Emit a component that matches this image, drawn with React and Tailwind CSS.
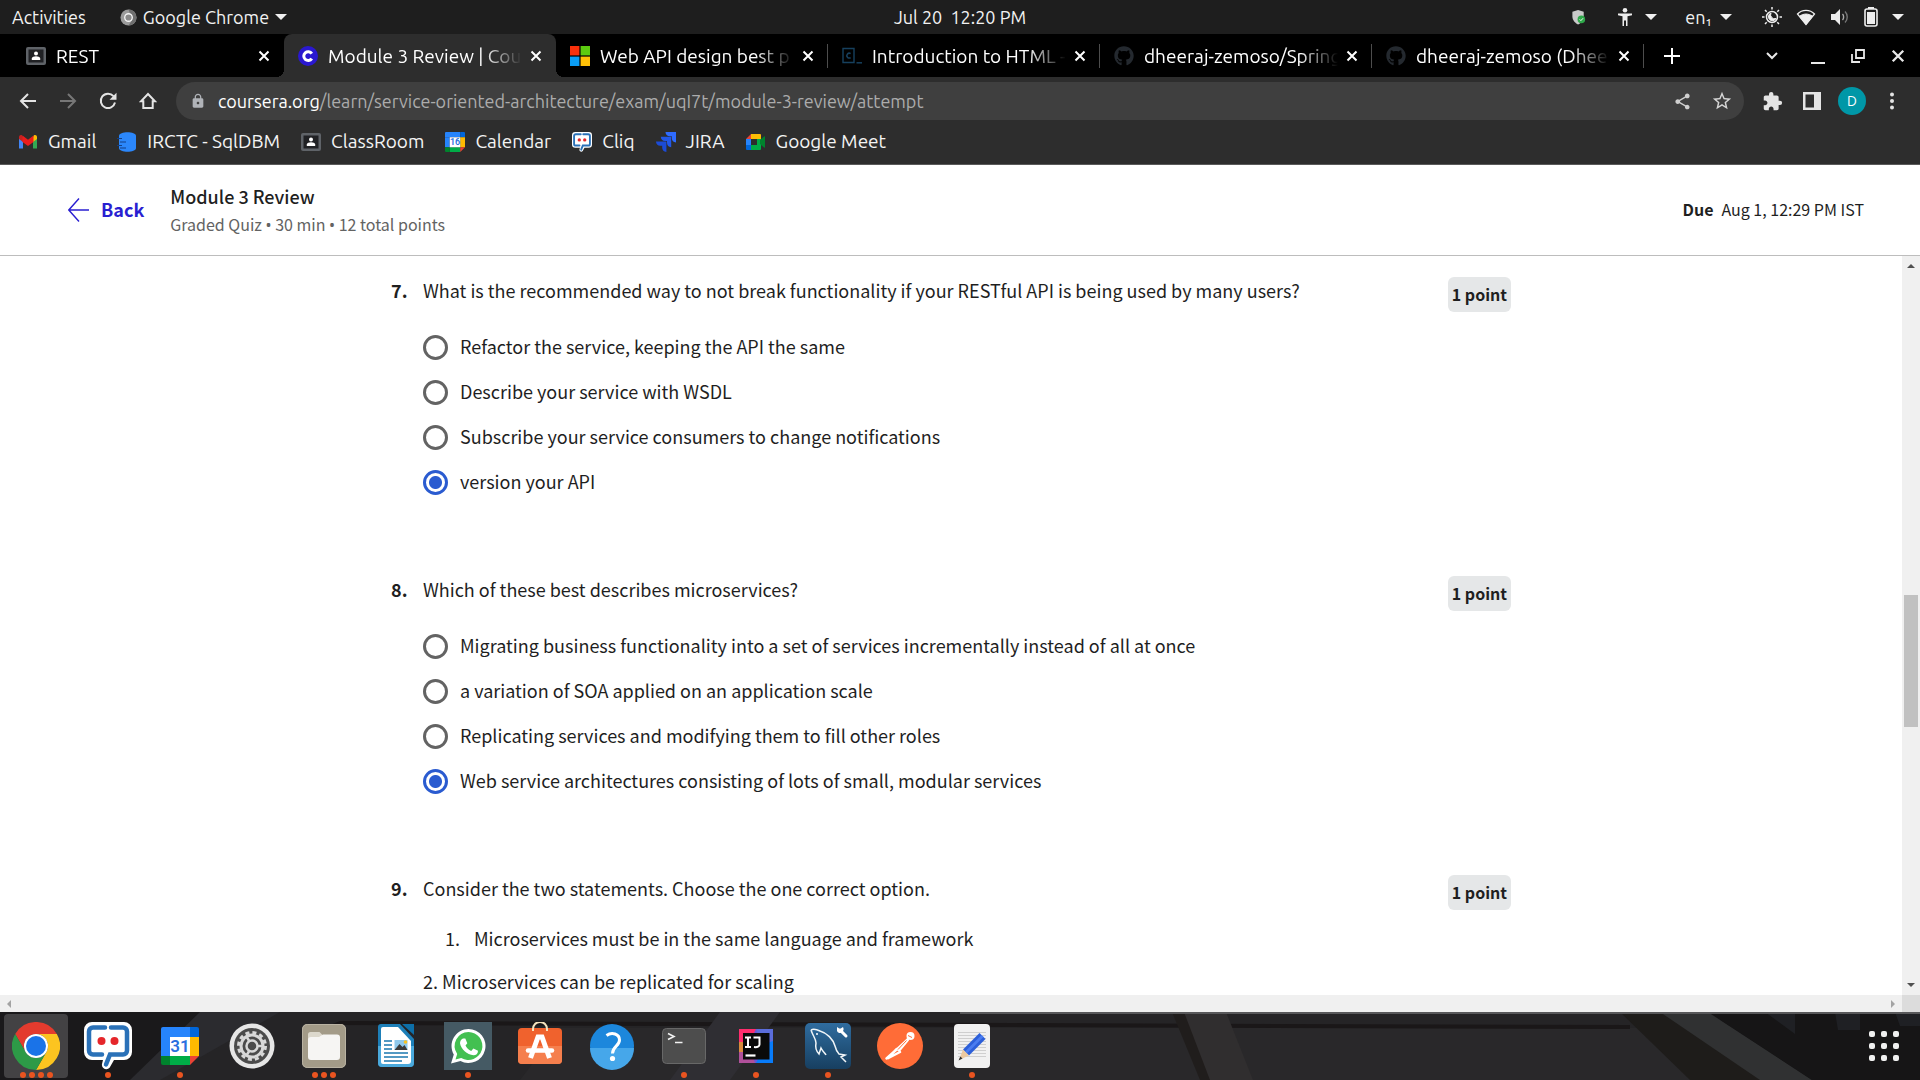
import React from "react";
import { FaGithub } from "react-icons/fa";
import { MdExtension, MdOutlineStarBorder, MdShare, MdLock } from "react-icons/md";

const uiFont = "font-['Ubuntu','Noto_Sans',sans-serif]";
const pageFont = "font-['Source_Sans_Pro','Noto_Sans_CJK_SC',sans-serif]";

function Icon({ size = "size-5", box = "0 0 20 20", children }) {
  return (
    <svg viewBox={box} className={`${size} shrink-0`} fill="none" aria-hidden="true">
      {children}
    </svg>
  );
}

/* ---------- small favicons ---------- */

const ClassroomIcon = () => (
  <Icon>
    <rect x="0" y="1" width="20" height="18" rx="2" fill="#5f6368" />
    <rect x="2.5" y="3.5" width="15" height="13" fill="#202124" />
    <circle cx="10" cy="7.6" r="2" fill="#fff" />
    <path d="M5.8 14v-1.4c0-1.6 2.4-2.3 4.2-2.3s4.2.7 4.2 2.3V14z" fill="#fff" />
  </Icon>
);

const CourseraIcon = () => (
  <Icon>
    <circle cx="10" cy="10" r="10" fill="#2a18d0" />
    <path d="M13.8 7.6A4.4 4.4 0 1 0 13.8 12.6" stroke="#fff" strokeWidth="3" />
  </Icon>
);

const MicrosoftIcon = () => (
  <Icon>
    <path fill="#f9300b" d="M0 0h9.4v9.4H0z" />
    <path fill="#5ccb10" d="M10.6 0H20v9.4h-9.4z" />
    <path fill="#0a9df5" d="M0 10.6h9.4V20H0z" />
    <path fill="#ffc107" d="M10.6 10.6H20V20h-9.4z" />
  </Icon>
);

const CodecademyIcon = () => (
  <Icon>
    <path d="M1 2.5h11v14H1z" stroke="#16405e" strokeWidth="1.4" />
    <path d="M8.6 7.6a2.4 2.4 0 1 0 0 4" stroke="#16405e" strokeWidth="1.5" />
    <path d="M14.5 16.8H20" stroke="#16405e" strokeWidth="1.5" />
  </Icon>
);

const GithubTabIcon = () => <FaGithub className="size-5 shrink-0 text-[#24292f]" aria-hidden="true" />;

const GmailIcon = () => (
  <Icon>
    <path d="M1 5v11.5h4V9z" fill="#4285f4" />
    <path d="M15 9v7.500h4V5z" fill="#34a853" />
    <path d="M15 5v5l4-3V5c0-2-2-2.500-3.200-1.600z" fill="#fbbc04" />
    <path d="M1 5v2l4 3V5l-.8-1.600C3 2.500 1 3 1 5z" fill="#c5221f" />
    <path d="M4.500 3.600L10 7.800l5.500-4.200V10L10 14 4.500 10z" fill="#ea1c1c" />
  </Icon>
);

const SqlDbmIcon = () => (
  <Icon>
    <path d="M2 4c0-5 17-5 17 0v12c0 5-17 5-17 0z" fill="#2b87fb" />
    <path d="M0 6.500h5M3 10h6M0 13.500h5M3 16h6" stroke="#123f86" strokeWidth="1.200" />
  </Icon>
);

function CalendarIcon({ day, size = "size-5" }) {
  return (
    <Icon size={size} box="0 0 38 38">
      <path d="M2 0h27v10H0V2a2 2 0 0 1 2-2z" fill="#2684fc" />
      <path d="M29 0h7a2 2 0 0 1 2 2v8h-9z" fill="#0066da" />
      <path d="M0 10h9v19H0z" fill="#2684fc" />
      <path d="M29 10h9v19h-9z" fill="#ffba00" />
      <path d="M9 29h20v9H9z" fill="#00ac47" />
      <path d="M0 29h9v9H2a2 2 0 0 1-2-2z" fill="#00832d" />
      <path d="M29 29h9l-9 9z" fill="#ea4335" />
      <path d="M9 10h20v19H9z" fill="#fff" />
      <text x="19" y="25" textAnchor="middle" fontSize="17" fontWeight="600" fontFamily="Roboto, sans-serif" fill="#2a6fe0">
        {day}
      </text>
    </Icon>
  );
}

function CliqIcon({ size = "size-5" }) {
  return (
    <Icon size={size} box="0 0 48 48">
      <path d="M8 0h32a8 8 0 0 1 8 8v22a8 8 0 0 1-8 8H30l-4 7c-2 4-9 2-8-3l1-4H8a8 8 0 0 1-8-8V8a8 8 0 0 1 8-8z" fill="#fff" />
      <path
        d="M21 5.500H9A4 4 0 0 0 5 9.500v19a4 4 0 0 0 4 4h9M27 5.500h12a4 4 0 0 1 4 4v19a4 4 0 0 1-4 4H26l-4 10"
        stroke="#2a71b8"
        strokeWidth="4.500"
        strokeLinecap="round"
      />
      <circle cx="17.500" cy="19" r="4" fill="#e5262b" />
      <circle cx="30.500" cy="19" r="4" fill="#e5262b" />
    </Icon>
  );
}

const JiraIcon = () => (
  <Icon>
    <path d="M9.500 0H20v10.500c-2.600 0-4.200-2-4.200-4.200V4.300h-2.100C11.300 4.300 9.500 2.600 9.500 0z" fill="#2e6bff" />
    <path d="M4.800 4.800h10.400v10.400c-2.600 0-4.200-2-4.200-4.200V9H9c-2.500 0-4.200-1.700-4.200-4.200z" fill="#2257e8" />
    <path d="M0 9.500h10.400V20c-2.600 0-4.200-2-4.200-4.200v-2H4.200C1.700 13.800 0 12 0 9.500z" fill="#1b4bd6" />
  </Icon>
);

const MeetIcon = () => (
  <Icon>
    <path d="M0 7l5-5v5z" fill="#ea4335" />
    <path d="M5 2h9a1 1 0 0 1 1 1v4H5z" fill="#fbbc04" />
    <path d="M0 7h5v6H0z" fill="#2684fc" />
    <path d="M0 13h5v5H1a1 1 0 0 1-1-1z" fill="#0066da" />
    <path d="M5 13h6V7h4v10a1 1 0 0 1-1 1H5z" fill="#00ac47" />
    <path d="M14 8l4-3.500c.6-.5 1-.2 1 .5v10c0 .7-.4 1-1 .5L14 12z" fill="#00832d" />
  </Icon>
);

/* ---------- desktop top bar ---------- */

const Caret = () => <span className="size-0 border-x-6 border-t-6 border-x-transparent border-t-[#f0f0f0]" />;

function TopBar() {
  return (
    <header className="grid h-[34px] shrink-0 grid-cols-[1fr_auto_1fr] items-center bg-[#1e1e1e] text-[18px] leading-6 text-[#f2f2f2]">
      <div className="flex items-center gap-[34px] pl-3">
        <button>Activities</button>
        <button className="flex items-center">
          <svg viewBox="0 0 18 18" className="mr-1.5 size-[17px]" fill="none" aria-hidden="true">
            <circle cx="9" cy="9" r="8.500" fill="#9b9b9b" />
            <path d="M9 .5a8.500 8.500 0 0 1 0 17l4-6z" fill="#6f6f6f" />
            <circle cx="9" cy="9" r="4" fill="#8a8a8a" stroke="#f5f5f5" strokeWidth="1.400" />
          </svg>
          <span className="mr-1.5">Google Chrome</span>
          <Caret />
        </button>
      </div>
      <time className="whitespace-pre">Jul 20  12:20 PM</time>
      <div className="flex items-center justify-end pr-4">
        <svg viewBox="0 0 16 18" className="mr-[30px] h-[17px] w-4" fill="none" aria-label="Shield">
          <path d="M7 1l6 2v5c0 4-3 7-6 8.500C4 15 1 12 1 8V3z" fill="#c9c9c9" />
          <circle cx="10.500" cy="11" r="4" fill="#2fa84a" />
          <path d="M8.700 11l1.300 1.300 2.300-2.500" stroke="#fff" />
        </svg>
        <button className="mr-7 flex items-center gap-3" aria-label="Accessibility">
          <svg viewBox="0 0 16 18" className="h-[18px] w-4 text-[#eee]" fill="currentColor" aria-hidden="true">
            <circle cx="8" cy="2.300" r="2.300" />
            <path d="M1 5.500h14v1.800l-4.500 1V18H9v-5.500H7V18H5.500V8.300L1 7.300z" />
          </svg>
          <Caret />
        </button>
        <button className="mr-[30px] flex items-center gap-2">
          <span>en₁</span>
          <Caret />
        </button>
        <button className="flex items-center gap-3.5 text-[#eee]" aria-label="System">
          <svg viewBox="0 0 20 20" className="size-5" fill="none" stroke="currentColor" aria-hidden="true">
            <circle cx="10" cy="10" r="5.500" strokeWidth="1.500" />
            <path d="M9 6a4 4 0 1 0 5 5.500 4 4 0 0 1-5-5.500z" fill="currentColor" />
            <path d="M10 0v2.500M10 17.500V20M0 10h2.500M17.500 10H20M3 3l1.700 1.700M15.300 15.300L17 17M3 17l1.700-1.700M15.300 4.700L17 3" strokeWidth="1.500" />
          </svg>
          <svg viewBox="0 0 20 18" className="h-[18px] w-5" fill="none" stroke="currentColor" aria-hidden="true">
            <path d="M1.500 6C6 1.200 14 1.200 18.500 6L10 16.500z" strokeWidth="1.300" />
            <path d="M3.500 8.300c4-3 9-3 13 0L10 16.500z" fill="currentColor" />
          </svg>
          <svg viewBox="0 0 20 18" className="h-[18px] w-5" fill="none" aria-hidden="true">
            <path d="M1 6h4l5-5v16l-5-5H1z" fill="currentColor" />
            <path d="M12.500 6c1.500 1.500 1.500 4.500 0 6" stroke="#aaa" strokeWidth="1.400" />
            <path d="M15 3.500c3 3 3 8 0 11" stroke="#777" strokeWidth="1.400" />
          </svg>
          <svg viewBox="0 0 14 20" className="h-5 w-3.5" fill="none" aria-hidden="true">
            <path d="M4 0h6v2H4z" fill="currentColor" />
            <rect x="1" y="2" width="12" height="17" rx="2" stroke="currentColor" strokeWidth="1.600" />
            <rect x="3" y="5" width="8" height="12" fill="currentColor" />
          </svg>
          <Caret />
        </button>
      </div>
    </header>
  );
}

/* ---------- browser chrome ---------- */

const Cross = ({ size = "size-3" }) => (
  <svg viewBox="0 0 12 12" className={size} stroke="currentColor" strokeWidth="2" aria-hidden="true">
    <path d="M1.500 1.500l9 9M10.500 1.500l-9 9" />
  </svg>
);

const tabs = [
  { title: "REST", icon: <ClassroomIcon /> },
  { title: "Module 3 Review | Cou", icon: <CourseraIcon />, active: true },
  { title: "Web API design best p", icon: <MicrosoftIcon />, divider: true },
  { title: "Introduction to HTML -", icon: <CodecademyIcon />, divider: true },
  { title: "dheeraj-zemoso/Spring", icon: <GithubTabIcon />, divider: true },
  { title: "dheeraj-zemoso (Dhee", icon: <GithubTabIcon />, divider: true },
];

function Tab({ title, icon, active, divider }) {
  return (
    <div
      role="tab"
      aria-selected={!!active}
      className={`relative flex h-full w-[272px] min-w-0 items-center pr-2.5 pl-3.5 ${active ? "rounded-t-lg bg-[#2d2d2d]" : ""}`}
    >
      {active && (
        <>
          <span className="absolute bottom-0 -left-2 size-2 bg-[radial-gradient(circle_at_0_0,transparent_8px,#2d2d2d_8px)]" />
          <span className="absolute -right-2 bottom-0 size-2 bg-[radial-gradient(circle_at_100%_0,transparent_8px,#2d2d2d_8px)]" />
        </>
      )}
      {icon}
      <span className="mr-1 ml-2.5 min-w-0 flex-1 overflow-hidden whitespace-nowrap [mask-image:linear-gradient(to_right,black_80%,transparent)]">
        {title}
      </span>
      <button className="grid size-5 shrink-0 place-items-center" aria-label={`Close ${title}`}>
        <Cross />
      </button>
      {divider && <span className="absolute top-2.5 right-0 h-6 w-px bg-[#4d4d4d]" />}
    </div>
  );
}

function TabStrip() {
  return (
    <div className="flex h-[43px] shrink-0 items-center bg-black pr-3 pl-3 text-[19px] leading-6 text-white">
      <div role="tablist" className="flex h-full min-w-0">
        {tabs.map((t) => (
          <Tab key={t.title} {...t} />
        ))}
      </div>
      <button className="ml-4 grid size-6 shrink-0 place-items-center" aria-label="New tab">
        <svg viewBox="0 0 16 16" className="size-4" stroke="currentColor" strokeWidth="2" aria-hidden="true">
          <path d="M8 0v16M0 8h16" />
        </svg>
      </button>
      <div className="ml-auto flex shrink-0 items-center gap-5 text-[#e8e8e8]">
        <button className="grid size-6 place-items-center" aria-label="Search tabs">
          <svg viewBox="0 0 12 8" className="w-3" fill="none" stroke="currentColor" strokeWidth="2" aria-hidden="true">
            <path d="M1 1l5 5 5-5" />
          </svg>
        </button>
        <button className="ml-1 flex h-6 w-5 items-end justify-center pb-1" aria-label="Minimize">
          <span className="h-0.5 w-3.5 bg-current" />
        </button>
        <button className="grid h-6 w-5 place-items-center" aria-label="Restore">
          <svg viewBox="0 0 14 14" className="size-3.5" fill="none" stroke="currentColor" strokeWidth="1.800" aria-hidden="true">
            <path d="M5 1h8v8H5zM1 5v8h8" />
          </svg>
        </button>
        <button className="grid h-6 w-5 place-items-center" aria-label="Close window">
          <Cross size="size-3.5" />
        </button>
      </div>
    </div>
  );
}

function Toolbar() {
  return (
    <div className="flex h-12 shrink-0 items-center bg-[#2d2d2d] pr-4 pl-4 text-[#e4e4e4]">
      <div className="mr-4 flex items-center gap-4">
        <button className="grid size-6 place-items-center" aria-label="Back">
          <svg viewBox="0 0 18 18" className="size-[18px]" fill="none" stroke="currentColor" strokeWidth="2" aria-hidden="true">
            <path d="M17 9H2M9 2L2 9l7 7" />
          </svg>
        </button>
        <button className="grid size-6 place-items-center text-[#777]" aria-label="Forward">
          <svg viewBox="0 0 18 18" className="size-[18px]" fill="none" stroke="currentColor" strokeWidth="2" aria-hidden="true">
            <path d="M1 9h15M9 2l7 7-7 7" />
          </svg>
        </button>
        <button className="grid size-6 place-items-center" aria-label="Reload">
          <svg viewBox="0 0 18 18" className="size-[18px]" fill="none" aria-hidden="true">
            <path d="M14.500 4.200A7.200 7.200 0 1 0 16 10.500" stroke="currentColor" strokeWidth="2" />
            <path d="M17.500 .8v7h-7z" fill="currentColor" />
          </svg>
        </button>
        <button className="grid size-6 place-items-center" aria-label="Home">
          <svg viewBox="0 0 18 18" className="size-[18px]" fill="none" stroke="currentColor" strokeWidth="2" aria-hidden="true">
            <path d="M9 2L2 9.300h2.300V16h9.400V9.300H16z" />
          </svg>
        </button>
      </div>
      <div className="flex h-[38px] min-w-0 flex-1 items-center rounded-full bg-[#3f3f3f] pr-2.5 pl-3.5">
        <MdLock className="size-4 text-[#b0b3b8]" aria-hidden="true" />
        <p className="ml-3 min-w-0 flex-1 truncate text-[18px] leading-6 text-[#acacac]">
          <span className="text-white">coursera.org</span>/learn/service-oriented-architecture/exam/uqI7t/module-3-review/attempt
        </p>
        <button className="mr-4 grid size-6 place-items-center text-[#cfcfcf]" aria-label="Share">
          <MdShare className="size-[19px]" />
        </button>
        <button className="grid size-6 place-items-center text-[#d6d6d6]" aria-label="Bookmark">
          <MdOutlineStarBorder className="size-[22px]" />
        </button>
      </div>
      <button className="ml-4 grid size-6 place-items-center" aria-label="Extensions">
        <MdExtension className="size-[21px]" />
      </button>
      <button className="ml-4 grid size-6 place-items-center" aria-label="Side panel">
        <svg viewBox="0 0 18 18" className="size-[18px]" aria-hidden="true">
          <path d="M0 0h18v18H0zM2.500 2.500v13H11v-13z" fill="currentColor" fillRule="evenodd" />
        </svg>
      </button>
      <button className="ml-3.5 grid size-7 place-items-center rounded-full bg-[#0097a7] text-sm text-white" aria-label="Profile D">
        D
      </button>
      <button className="ml-3.5 grid size-6 place-items-center" aria-label="Menu">
        <svg viewBox="0 0 4 18" className="h-[18px] w-1" fill="currentColor" aria-hidden="true">
          <circle cx="2" cy="2.500" r="2" />
          <circle cx="2" cy="9" r="2" />
          <circle cx="2" cy="15.500" r="2" />
        </svg>
      </button>
    </div>
  );
}

const bookmarks = [
  ["Gmail", <GmailIcon />],
  ["IRCTC - SqlDBM", <SqlDbmIcon />],
  ["ClassRoom", <ClassroomIcon />],
  ["Calendar", <CalendarIcon day="16" />],
  ["Cliq", <CliqIcon />],
  ["JIRA", <JiraIcon />],
  ["Google Meet", <MeetIcon />],
];

function Bookmarks() {
  return (
    <nav className="flex shrink-0 gap-[21px] border-b border-[#5a5a5a] bg-[#2d2d2d] pt-1 pb-2.5 pl-[18px] text-[19px] leading-[25px] text-[#f4f4f4]">
      {bookmarks.map(([label, icon]) => (
        <a key={label} href="#" className="flex items-center gap-2.5 whitespace-nowrap">
          {icon}
          {label}
        </a>
      ))}
    </nav>
  );
}

/* ---------- quiz page ---------- */

const questions = [
  {
    n: 7,
    text: "What is the recommended way to not break functionality if your RESTful API is being used by many users?",
    options: [
      "Refactor the service, keeping the API the same",
      "Describe your service with WSDL",
      "Subscribe your service consumers to change notifications",
      "version your API",
    ],
    checked: 3,
  },
  {
    n: 8,
    text: "Which of these best describes microservices?",
    options: [
      "Migrating business functionality into a set of services incrementally instead of all at once",
      "a variation of SOA applied on an application scale",
      "Replicating services and modifying them to fill other roles",
      "Web service architectures consisting of lots of small, modular services",
    ],
    checked: 3,
  },
  { n: 9, text: "Consider the two statements. Choose the one correct option." },
];

const Dot = () => <span className="font-['Noto_Sans',sans-serif]">•</span>;

function QuizHeader() {
  return (
    <div className="flex h-[91px] shrink-0 items-center border-b border-[#bdbdbd] bg-white pr-14 pl-[68px] text-[#1f1f1f]">
      <a href="#" className="flex items-center gap-3 text-[18px] leading-7 font-bold text-[#2a1fd1]">
        <svg viewBox="0 0 21 24" className="h-6 w-[21px]" fill="none" stroke="currentColor" strokeWidth="1.400" aria-hidden="true">
          <path d="M21 12H1M11 .5L.8 12 11 23.500" />
        </svg>
        <span className="pb-0.5">Back</span>
      </a>
      <div className="ml-[26px]">
        <h1 className="text-[18px] leading-7 font-medium">Module 3 Review</h1>
        <p className="text-base leading-7 text-[#636363]">
          Graded Quiz <Dot /> 30 min <Dot /> 12 total points
        </p>
      </div>
      <p className="ml-auto flex gap-2 pb-0.5 text-base leading-6">
        <b>Due</b>
        <span>Aug 1, 12:29 PM IST</span>
      </p>
    </div>
  );
}

function Question({ n, text, options, checked }) {
  return (
    <section className="flex items-start pb-[70px]">
      <b className="w-8 shrink-0 leading-7">{n}.</b>
      <div className="min-w-0 flex-1">
        <p id={`q${n}`} className="pb-0.5 leading-7">
          {text}
        </p>
        {options ? (
          <div role="radiogroup" aria-labelledby={`q${n}`} className="mt-[19px]">
            {options.map((o, i) => (
              <label key={o} className="flex h-[45px] items-center gap-3">
                <input
                  type="radio"
                  name={`q${n}`}
                  defaultChecked={i === checked}
                  className="size-[25px] shrink-0 appearance-none rounded-full border-3 border-[#636363] bg-white checked:border-[#2a5bd0] checked:bg-[radial-gradient(circle,#2a5bd0_6px,transparent_7px)]"
                />
                <span className="pb-1">{o}</span>
              </label>
            ))}
          </div>
        ) : (
          <div>
            <ol className="mt-[19px] pl-[22px]">
              <li className="flex">
                <span className="w-[29px]">1.</span>
                Microservices must be in the same language and framework
              </li>
            </ol>
            <p className="mt-[13px]">2. Microservices can be replicated for scaling</p>
          </div>
        )}
      </div>
      <b className="mt-px rounded-md bg-[#e5e7e8] px-1 py-[5px] text-base leading-[25px]">1 point</b>
    </section>
  );
}

function Quiz() {
  return (
    <div className="flex min-h-0 flex-1 flex-col bg-white">
      <div className="flex min-h-0 flex-1">
        <main className="min-w-0 flex-1 overflow-hidden px-6 pt-5 text-[18px] leading-[30px] text-[#1f1f1f]">
          <div className="mx-auto max-w-[1120px]">
            {questions.map((q) => (
              <Question key={q.n} {...q} />
            ))}
          </div>
        </main>
        <div className="flex w-[18px] shrink-0 flex-col items-center bg-[#f0f0f0] pt-2 pb-2">
          <span className="size-0 border-x-4 border-b-4 border-x-transparent border-b-[#505050]" />
          <span className="flex-[327]" />
          <span className="w-3.5 flex-[132] bg-[#c1c1c1]" />
          <span className="flex-[256]" />
          <span className="size-0 border-x-4 border-t-4 border-x-transparent border-t-[#505050]" />
        </div>
      </div>
      <div className="flex h-[17px] shrink-0 items-center bg-[#f0f0f0]">
        <span className="ml-[7px] size-0 border-y-4 border-r-4 border-y-transparent border-r-[#a3a3a3]" />
        <span className="mr-[7px] ml-auto size-0 border-y-4 border-l-4 border-y-transparent border-l-[#a3a3a3]" />
        <span className="h-full w-[18px] bg-[#dcdcdc]" />
      </div>
    </div>
  );
}

/* ---------- dock ---------- */

const ChromeDock = () => (
  <Icon size="size-12" box="0 0 48 48">
    <path d="M24 12H44.800A24 24 0 0 0 3.200 12L13.600 30A12 12 0 0 1 24 12z" fill="#e33b2e" />
    <path d="M34.400 30L24 48A24 24 0 0 0 44.800 12H24A12 12 0 0 1 34.400 30z" fill="#fcc420" />
    <path d="M13.600 30L3.200 12A24 24 0 0 0 24 48L34.400 30A12 12 0 0 1 13.600 30z" fill="#2d9a47" />
    <circle cx="24" cy="24" r="12" fill="#fff" />
    <circle cx="24" cy="24" r="10" fill="#1a73e8" />
  </Icon>
);

const SettingsDock = () => (
  <Icon size="size-12" box="0 0 48 48">
    <circle cx="24" cy="24" r="22.500" fill="#e6e6e6" />
    <circle cx="24" cy="24" r="18" fill="#4b4b4b" />
    <circle cx="24" cy="24" r="13.500" stroke="#d8d8d8" strokeWidth="3" strokeDasharray="4 3.070" />
    <circle cx="24" cy="24" r="11" stroke="#d8d8d8" strokeWidth="3" />
    <circle cx="24" cy="24" r="5.500" stroke="#d8d8d8" strokeWidth="2.500" />
    <path d="M29 24h6M21.500 19.500l-3-5M21.500 28.500l-3 5" stroke="#d8d8d8" strokeWidth="2.500" />
  </Icon>
);

const FilesDock = () => (
  <Icon size="size-12" box="0 0 48 48">
    <rect x="2" y="2" width="44" height="44" rx="5" fill="#a39b88" />
    <rect x="2.500" y="2.500" width="43" height="43" rx="5" stroke="#b9b2a2" />
    <path d="M8 15v-2.500a2.500 2.500 0 0 1 2.500-2.500h9l4 4H37a3 3 0 0 1 3 3v4H8z" fill="#dcd8cc" />
    <path d="M8 18a3 3 0 0 1 3-3h8l4-2.500h14a3 3 0 0 1 3 3V35a3 3 0 0 1-3 3H11a3 3 0 0 1-3-3z" fill="#f6f5f3" />
  </Icon>
);

const WriterDock = () => (
  <Icon size="size-12" box="0 0 48 48">
    <path d="M9 2h19l14 15v24a4 4 0 0 1-4 4H10a4 4 0 0 1-4-4V5a3 3 0 0 1 3-3z" fill="#1d7fb8" />
    <path d="M30 2h12v11z" fill="#0d6fa8" />
    <path d="M9 24h33v17a4 4 0 0 1-4 4H10a4 4 0 0 1-4-4V24z" fill="#4aa9dc" />
    <path d="M11 5h15l13 14v20a3 3 0 0 1-3 3H11a2 2 0 0 1-2-2V7a2 2 0 0 1 2-2z" fill="#fff" />
    <path d="M12 19h8M12 23h8M12 27h8M12 31h24M12 35h24M12 39h18" stroke="#1b78b0" strokeWidth="1.700" />
    <path d="M22.500 18h13v10h-13z" fill="#8fc9ec" />
    <path d="M22.500 28l5-6 3 3 2-2 3 5z" fill="#3a3a3a" />
    <circle cx="33.500" cy="20" r="1.800" fill="#f8c322" />
  </Icon>
);

const WhatsappDock = () => (
  <Icon size="size-12" box="0 0 48 48">
    <path d="M0 0h48v48H0z" fill="#455a64" />
    <path d="M24.500 7a17 17 0 1 1-8 32L7 41.500 9.800 32.500A17 17 0 0 1 24.500 7z" fill="#fff" />
    <path d="M24.500 10a14 14 0 1 1-7.300 26L11.500 37.500 13.200 32A14 14 0 0 1 24.500 10z" fill="#43c051" />
    <path d="M19 16.500l2.300.1 2 4.600-1.800 2.300c1.300 2.500 3 4.200 5.700 5.400l2.200-2.400 4.600 2.200c0 3-2 4.500-4.500 4.500-6.500-.5-12.500-6-13.500-12 0-2.200 1.200-4 3-4.700z" fill="#fff" />
  </Icon>
);

const SoftwareDock = () => (
  <Icon size="size-12" box="0 0 48 48">
    <rect x="2" y="6" width="44" height="36" rx="4" fill="#f0622d" />
    <path d="M2 24h44v14a4 4 0 0 1-4 4H6a4 4 0 0 1-4-4z" fill="#f57f4d" />
    <path d="M17 9V7a7 7 0 0 1 14 0v2" stroke="#f5e2bd" strokeWidth="2" />
    <path d="M14.500 36L22 15h4l7.500 21" stroke="#fff" strokeWidth="5" />
    <path d="M12 28.500h24" stroke="#fff" strokeWidth="4.500" strokeLinecap="round" />
  </Icon>
);

const HelpDock = () => (
  <Icon size="size-12" box="0 0 48 48">
    <circle cx="24" cy="24" r="22" fill="#1c87dc" />
    <path d="M2 26a22 22 0 0 0 44 0z" fill="#46a7ea" />
    <path d="M18.500 13.500C24 9.500 31.500 12 31.500 18c0 6-7 6.500-7 13.500" stroke="#fff" strokeWidth="3" />
    <circle cx="24.500" cy="36.500" r="2.600" fill="#fff" />
  </Icon>
);

const TerminalDock = () => (
  <Icon size="size-12" box="0 0 48 48">
    <rect x="2.500" y="6.500" width="43" height="35" rx="4" fill="#4d4d4d" stroke="#686868" />
    <path d="M8 11.500l6 3-6 3M15 20.500h7.500" stroke="#f2f2f2" strokeWidth="1.600" />
  </Icon>
);

const IntellijDock = () => (
  <Icon size="size-12" box="0 0 48 48">
    <path d="M7 7h34v34H7z" fill="#6b57d2" />
    <path d="M7 7h17l-8 16H7z" fill="#fe2d6d" />
    <path d="M7 20h10v12H7z" fill="#d98b3c" />
    <path d="M7 30h12l4 11H7z" fill="#b0509a" />
    <path d="M41 16v25H24l6-12z" fill="#087cfa" />
    <path d="M24 7h17v12l-12 4z" fill="#5b6ddb" />
    <path d="M11 11h26.500v26.500H11z" fill="#0a0a0a" />
    <path d="M13 15.500h6M16 15.500v9.500M13 25h6M21.500 15.500h6v7c0 2-2 3-5.500 2.500" stroke="#fff" strokeWidth="2" />
    <path d="M13.500 33.500h10" stroke="#fff" strokeWidth="2.200" />
  </Icon>
);

const WorkbenchDock = () => (
  <Icon size="size-12" box="0 0 48 48">
    <defs>
      <linearGradient id="workbench" x1="0" y1="0" x2="0" y2="1">
        <stop stopColor="#2f6c9f" />
        <stop offset="1" stopColor="#173f60" />
      </linearGradient>
    </defs>
    <rect x="1" y="1" width="46" height="46" rx="5" fill="url(#workbench)" />
    <path
      d="M7 8c3-2 7 0 9 1 7 2 13 8 15 15 1 4 2 6 4 8l6 1-4 2 5 5M7 8c2 6 5 9 5 13-1 5 1 9 3 11l2-6c2 4 4 5 5 7"
      stroke="#f0f5f8"
      strokeWidth="1.500"
    />
    <circle cx="13" cy="12" r="1" fill="#fff" />
    <path d="M36 8l6 6" stroke="#fff" strokeWidth="3" strokeLinecap="round" />
    <path d="M33 5v4a3 3 0 0 0 5 1 4 4 0 0 0 1-5l-3 2z" fill="#fff" />
  </Icon>
);

const PostmanDock = () => (
  <Icon size="size-12" box="0 0 48 48">
    <circle cx="24" cy="24" r="23" fill="#ff6c37" />
    <circle cx="34.500" cy="14" r="4" fill="#fff" />
    <path d="M31.500 16L20 26.500l3.500 3.500L33 18.500z" fill="#fff" />
    <path d="M20.500 27l-9 9.500L24 30M20 28l-9.500 8.500M32 17L22.500 28" stroke="#fff" strokeWidth="2.500" strokeLinecap="round" />
    <path d="M30.500 18.500l-8.500 9M32 13.500l4 2" stroke="#ff6c37" strokeWidth="1" />
  </Icon>
);

const EditorDock = () => (
  <Icon size="size-12" box="0 0 48 48">
    <rect x="6" y="2" width="36" height="44" rx="4" fill="#f1f1f1" />
    <path d="M10 10.500h28M10 13.500h28M10 16.500h28M10 19.500h28M10 22.500h28M10 25.500h28M10 28.500h28M10 31.500h28M10 34.500h28" stroke="#cfcfcf" />
    <path d="M31.500 11l6 6L21 33.500l-6-6z" fill="#2c5fd9" />
    <path d="M33.500 13l2 2L19 31.500l-2-2z" fill="#4a7cf0" />
    <path d="M15 27.500l6 6L11 38z" fill="#ecc9a0" />
    <path d="M12.300 34.500l2.200 2L10.500 38.500z" fill="#333" />
  </Icon>
);

const dockItems = [
  { label: "Google Chrome", icon: <ChromeDock />, dots: 4, active: true },
  { label: "Cliq", icon: <CliqIcon size="size-12" />, dots: 1 },
  { label: "Calendar", icon: <CalendarIcon day="31" size="size-[38px]" />, dots: 1 },
  { label: "Settings", icon: <SettingsDock />, dots: 0 },
  { label: "Files", icon: <FilesDock />, dots: 3 },
  { label: "Writer", icon: <WriterDock />, dots: 0 },
  { label: "WhatsApp", icon: <WhatsappDock />, dots: 1 },
  { label: "Software", icon: <SoftwareDock />, dots: 0 },
  { label: "Help", icon: <HelpDock />, dots: 0 },
  { label: "Terminal", icon: <TerminalDock />, dots: 1 },
  { label: "IntelliJ IDEA", icon: <IntellijDock />, dots: 1 },
  { label: "MySQL Workbench", icon: <WorkbenchDock />, dots: 1 },
  { label: "Postman", icon: <PostmanDock />, dots: 0 },
  { label: "Text Editor", icon: <EditorDock />, dots: 1 },
];

function Wood() {
  return (
    <svg viewBox="0 0 1920 68" preserveAspectRatio="none" className="absolute inset-0 h-full w-full" aria-hidden="true">
      <path fill="#1a191b" d="M0 0h1920v68H0z" />
      <path fill="#252426" d="M250 0h1470v68H140z" />
      <path fill="#29282a" d="M560 16h1140v52H520z" />
      <path fill="#2b2b2f" d="M200 0h80L160 68h-30z" />
      <path fill="#1a1718" d="M340 9l1290 4v4L330 13z" />
      <path fill="#2f2e33" d="M720 0h60l-50 68h-60z" />
      <path fill="#201d1c" d="M1172 0h14l26 68h-12z" />
      <path fill="#302e2f" d="M1184 0h42l27 68h-43z" />
      <path fill="#1e1c1a" d="M1620 0h60l120 68h-110z" />
      <path fill="#303132" d="M1660 0h48l104 68h-52z" />
      <path fill="#161516" d="M1708 0h212v68h-108z" />
      <path fill="#1f2024" d="M1765 0h30v22zM1835 0h25v18h-22zM1895 0h25v14h-20z" />
      <path fill="#58585a" d="M960 0h960v2H960z" />
    </svg>
  );
}

function Dock() {
  return (
    <footer className="relative h-[68px] shrink-0 overflow-hidden">
      <Wood />
      <div className="relative flex h-full items-center gap-2 pr-[21px] pl-1">
        {dockItems.map(({ label, icon, dots, active }) => (
          <button
            key={label}
            aria-label={label}
            className={`relative grid size-16 shrink-0 place-items-center rounded ${active ? "bg-[#434244]" : ""}`}
          >
            {icon}
            <span className="absolute inset-x-0 bottom-0 flex justify-center gap-[3px]">
              {Array.from({ length: dots }, (_, i) => (
                <i key={i} className="size-1.5 rounded-full bg-[#e95420]" />
              ))}
            </span>
          </button>
        ))}
        <button aria-label="Show applications" className="ml-auto grid grid-cols-3 gap-1.5">
          {Array.from({ length: 9 }, (_, i) => (
            <i key={i} className="size-1.5 rounded-xs bg-[#f0f0f0]" />
          ))}
        </button>
      </div>
    </footer>
  );
}

export default function App() {
  return (
    <div className={`flex h-screen flex-col overflow-hidden ${uiFont}`}>
      <TopBar />
      <TabStrip />
      <Toolbar />
      <Bookmarks />
      <div className={`flex min-h-0 flex-1 flex-col ${pageFont}`}>
        <QuizHeader />
        <Quiz />
      </div>
      <Dock />
    </div>
  );
}
